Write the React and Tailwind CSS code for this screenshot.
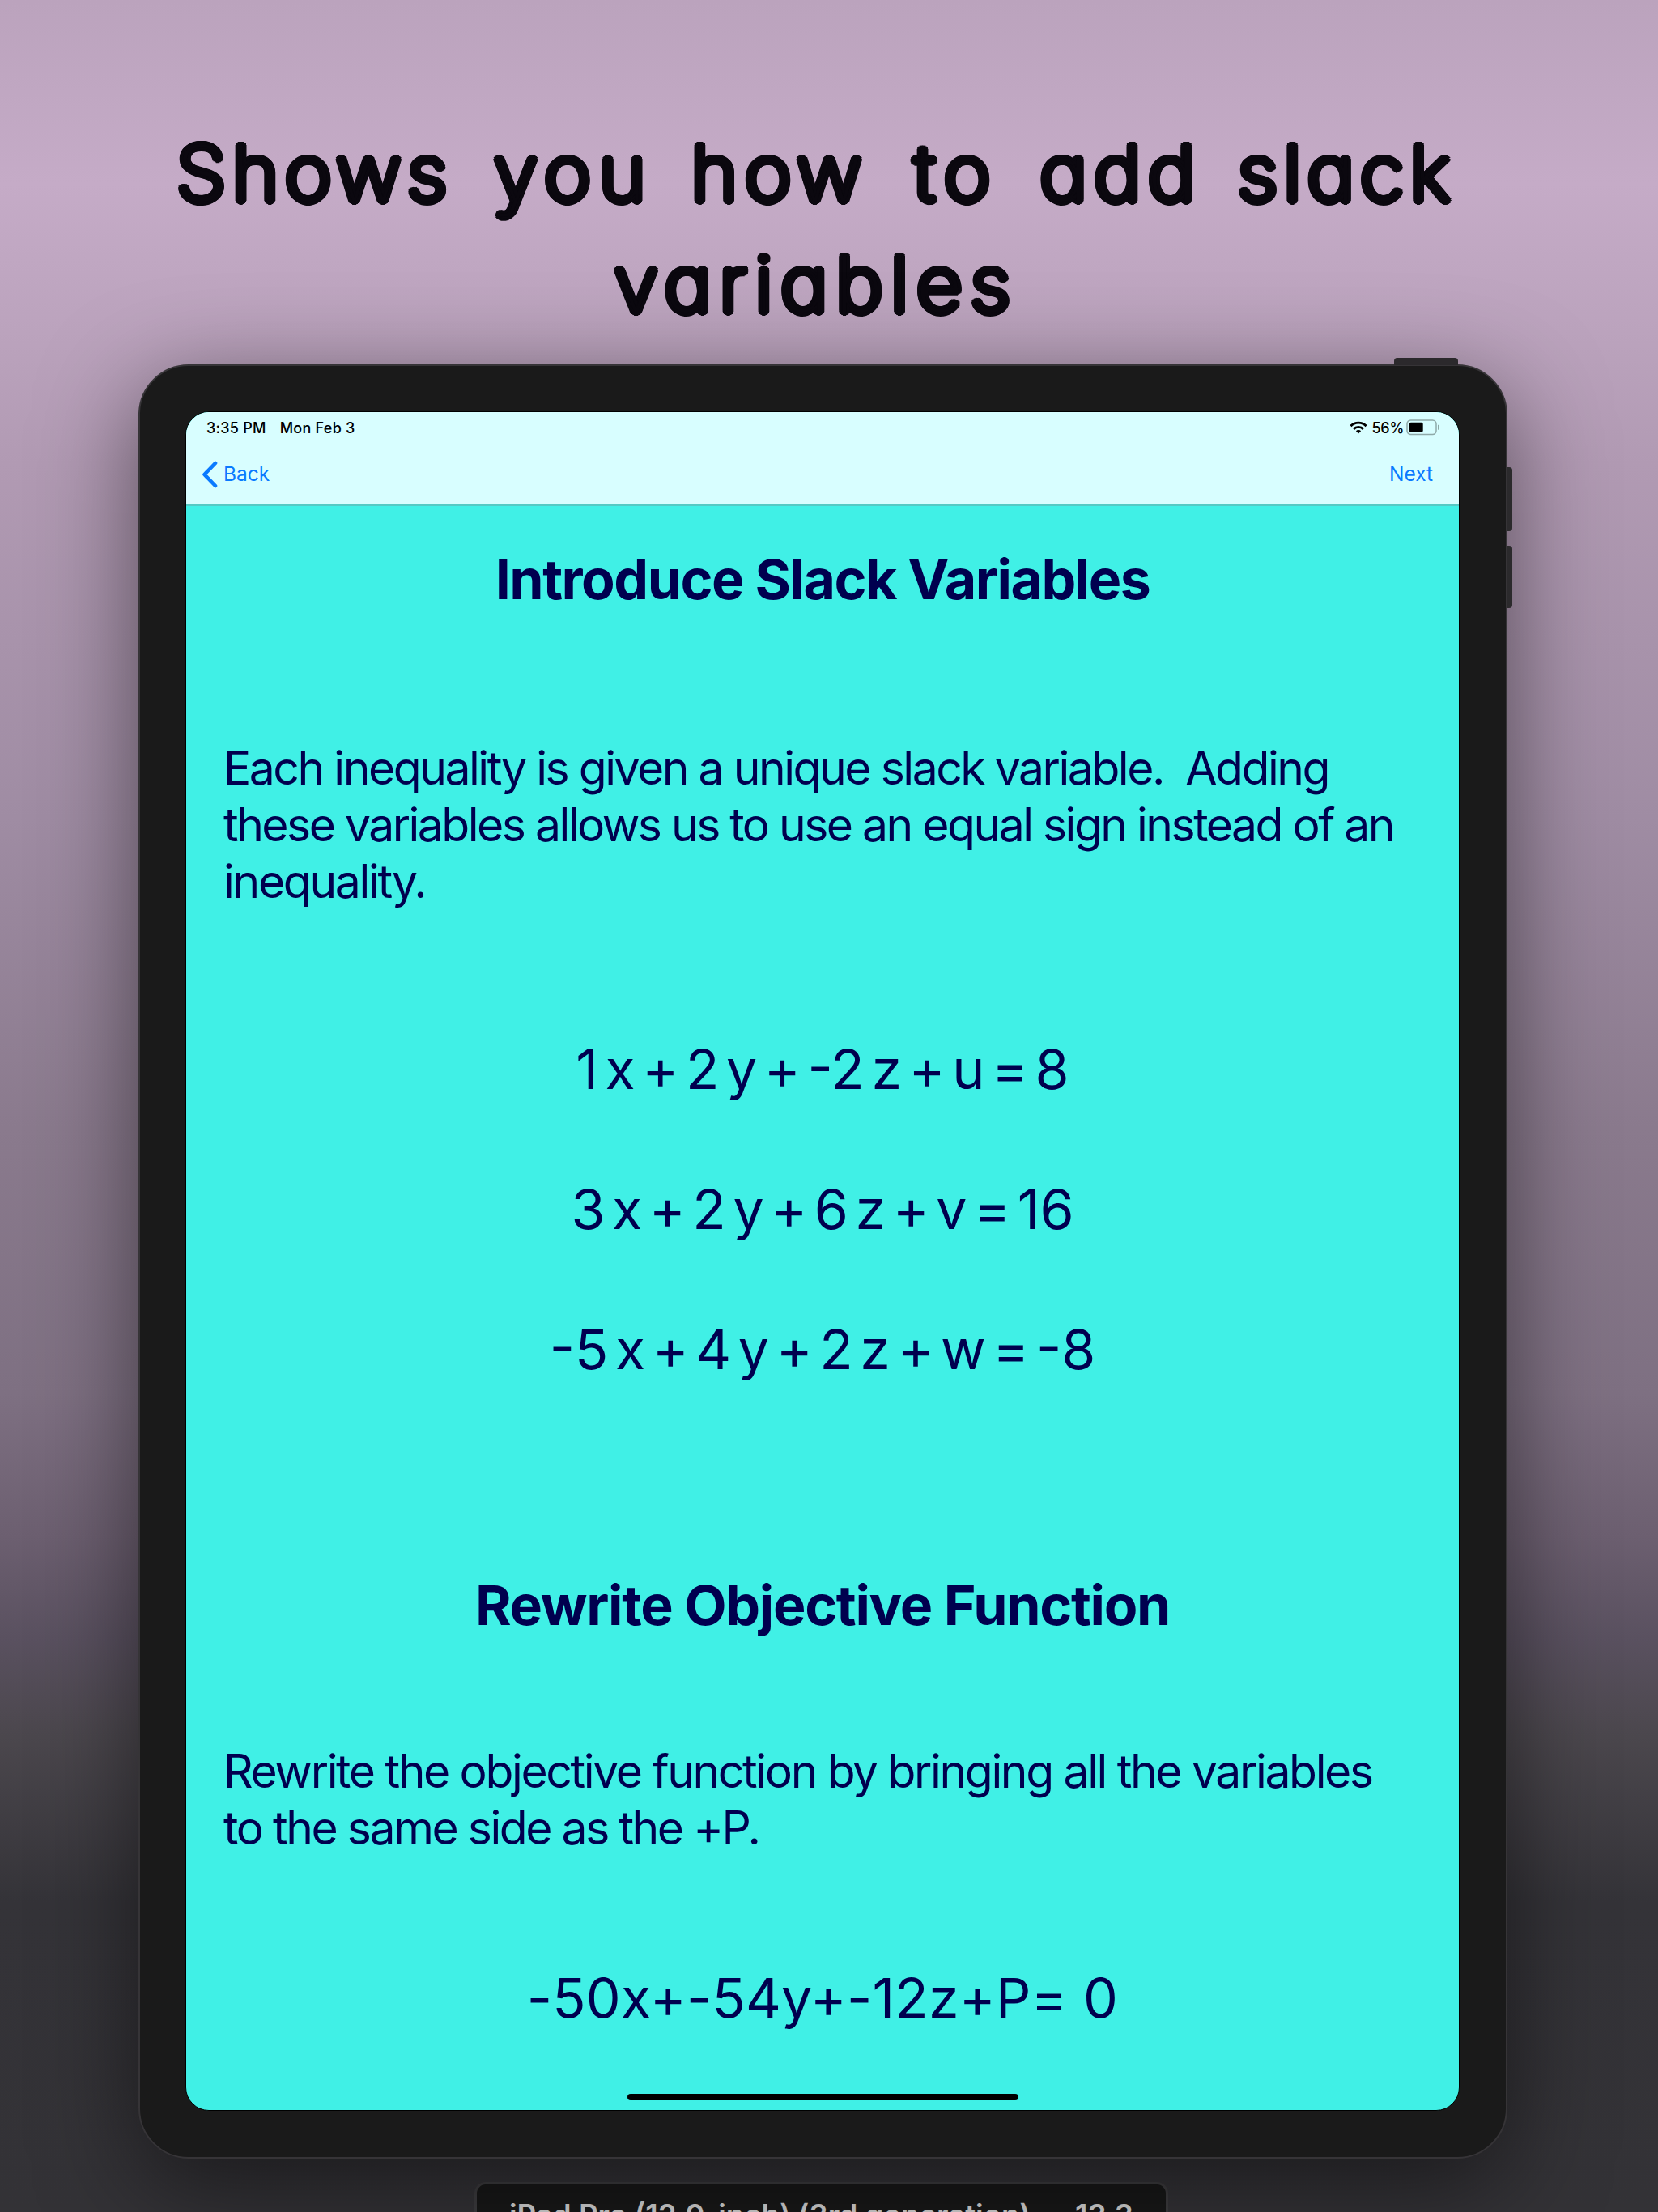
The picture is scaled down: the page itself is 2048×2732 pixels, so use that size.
import React from "react";

const TITLE = [
  [
    { w: "Shows", s: "tracking-[7px]" },
    { w: "you", s: "tracking-[9.5px] ml-[48px]" },
    { w: "how", s: "tracking-[8px] ml-[44px]" },
    { w: "to", s: "tracking-[10.5px] ml-[54px]" },
    { w: "add", s: "tracking-[8px] ml-[48px]" },
    { w: "slack", s: "tracking-[6.8px] ml-[42px]" },
  ],
  [{ w: "variables", s: "tracking-[9.2px]" }],
];

function TitleLine({ words }) {
  return (
    <div className="flex h-[137px] items-center justify-center">
      {words.map((t) => (
        <span key={t.w} className={t.s}>{t.w}</span>
      ))}
    </div>
  );
}

function Equation({ tokens }) {
  return (
    <div className="flex h-[80px] items-center justify-center gap-[8.6px] text-[68px] leading-[80px]">
      {tokens.map((t, i) => (
        <span key={i}>{t}</span>
      ))}
    </div>
  );
}

function StatusBar() {
  return (
    <div className="flex h-[38px] items-center justify-between pl-[25px] pr-[23px] text-[18px] font-medium text-black">
      <div className="flex gap-[17px] tracking-[0.25px]">
        <span>3:35 PM</span>
        <span>Mon Feb 3</span>
      </div>
      <div className="flex items-center">
        <svg width="22" height="16" viewBox="0 0 22 16" className="mr-[6px]">
          <g fill="none" stroke="#000" strokeWidth="2.9">
            <path d="M1.4 6.1a13.6 13.6 0 0 1 19.2 0" />
            <path d="M5 9.9a8.5 8.5 0 0 1 12 0" />
          </g>
          <path d="M7.9 12.3a4.4 4.4 0 0 1 6.2 0L11 15.6z" />
        </svg>
        <span className="tracking-[-0.3px]">56%</span>
        <svg width="42" height="20" viewBox="0 0 42 20" className="ml-[3px]">
          <rect x="1" y="1" width="36" height="17.5" rx="4.5" fill="none" stroke="#8ea9a8" strokeWidth="1.5" />
          <rect x="3.7" y="3.7" width="17" height="12" rx="2" />
          <path d="M39 6.5c2.6 1 2.6 5.400 0 6.400z" fill="#8ea9a8" />
        </svg>
      </div>
    </div>
  );
}

function NavBar() {
  return (
    <div className="flex h-[77px] items-center justify-between pl-[19px] pr-[32px] text-[24.5px] text-[#0a7aff]">
      <div className="flex items-center gap-[7px]">
        <svg width="20" height="34" viewBox="0 0 20 34" fill="none" stroke="#0a7aff" strokeWidth="4.6" strokeLinecap="round" strokeLinejoin="round">
          <path d="M17 3 3.500 17 17 31" />
        </svg>
        <span>Back</span>
      </div>
      <span>Next</span>
    </div>
  );
}

export default function App() {
  return (
    <div className="flex h-[2732px] w-[2048px] flex-col overflow-hidden bg-[linear-gradient(to_bottom,#bba3bd_0%,#c5abc7_8.3%,#bba3bd_15%,#b19ab3_21%,#9f8ca3_37%,#8a7a8d_51%,#7e7082_63%,#6c5f70_69.500%,#5a5160_74%,#4b474d_78.500%,#343338_86%,#333236_100%)] font-['Inter',sans-serif]">
      <h1 className="h-[450px] shrink-0 origin-[1006px_50%] scale-x-[1.04] pr-[32px] pt-[145px] text-[95px] font-extralight leading-[137px] text-[#0b080f] [font-feature-settings:'cv11'_1] [text-shadow:4.5px_0_#0b080f,4.16px_1.72px_#0b080f,3.18px_3.18px_#0b080f,1.72px_4.16px_#0b080f,0_4.5px_#0b080f,-1.72px_4.16px_#0b080f,-3.18px_3.18px_#0b080f,-4.16px_1.72px_#0b080f,-4.5px_0_#0b080f,-4.16px_-1.72px_#0b080f,-3.18px_-3.18px_#0b080f,-1.72px_-4.16px_#0b080f,0_-4.5px_#0b080f,1.72px_-4.16px_#0b080f,3.18px_-3.18px_#0b080f,4.16px_-1.72px_#0b080f]">
        {TITLE.map((words, i) => (
          <TitleLine key={i} words={words} />
        ))}
      </h1>

      <div className="relative ml-[171px] h-[2216px] w-[1691px] shrink-0 rounded-[62px] border-2 border-[#363437] bg-[#1a1a1a] p-[56px] shadow-[0_30px_120px_rgba(0,0,0,0.5)]">
        <div className="absolute -top-[10px] left-[1549px] h-[9px] w-[79px] rounded-t-[4px] bg-[#2b292c]" />
        <div className="absolute left-[1688px] top-[125px] h-[79px] w-[7px] rounded-r-[4px] bg-[#2b2a2c]" />
        <div className="absolute left-[1688px] top-[222px] h-[77px] w-[7px] rounded-r-[4px] bg-[#2b2a2c]" />

        <div className="flex h-[2099px] w-[1574px] flex-col overflow-hidden rounded-[29px] border border-black bg-[#40f0e6] text-[#00004f]">
          <header className="h-[116px] shrink-0 border-b-2 border-[#55c9c4] bg-[#d8feff]">
            <StatusBar />
            <NavBar />
          </header>

          <main className="flex flex-col">
            <h2 className="mt-[50px] h-[80px] text-center text-[68px] font-bold leading-[80px] tracking-[-1.5px]">Introduce Slack Variables</h2>
            <div className="ml-[46px] mt-[159px] whitespace-pre text-[57px] leading-[70px]">
              <p className="tracking-[-2.45px]">{"Each inequality is given a unique slack variable.  Adding"}</p>
              <p className="tracking-[-2.5px]">these variables allows us to use an equal sign instead of an</p>
              <p className="tracking-[-2.3px]">inequality.</p>
            </div>
            <div className="mt-[156px] flex flex-col gap-[93px]">
              <Equation tokens={["1", "x", "+", "2", "y", "+", "-2", "z", "+", "u", "=", "8"]} />
              <Equation tokens={["3", "x", "+", "2", "y", "+", "6", "z", "+", "v", "=", "16"]} />
              <Equation tokens={["-5", "x", "+", "4", "y", "+", "2", "z", "+", "w", "=", "-8"]} />
            </div>
            <h2 className="mt-[236px] h-[80px] text-center text-[68px] font-bold leading-[80px] tracking-[-1.3px]">Rewrite Objective Function</h2>
            <div className="ml-[46px] mt-[131px] whitespace-pre text-[57px] leading-[70px]">
              <p className="tracking-[-2.35px]">Rewrite the objective function by bringing all the variables</p>
              <p className="tracking-[-2.45px]">to the same side as the +P.</p>
            </div>
            <div className="mt-[134px] h-[80px] text-center text-[68px] leading-[80px] tracking-[0.2px]">-50x+-54y+-12z+P= 0</div>
            <div className="mx-auto mt-[79px] h-[8px] w-[483px] rounded-full bg-black" />
          </main>
        </div>
      </div>

      <div className="ml-[586px] mt-[29px] h-[100px] w-[857px] shrink-0 rounded-[14px] border-[3px] border-[#3d3c3f] bg-[#181818] pt-[18px] text-center text-[36.6px] font-semibold leading-[40px] text-[#d4d4d4]">
        iPad Pro (12.9-inch) (3rd generation) — 13.3
      </div>
    </div>
  );
}
